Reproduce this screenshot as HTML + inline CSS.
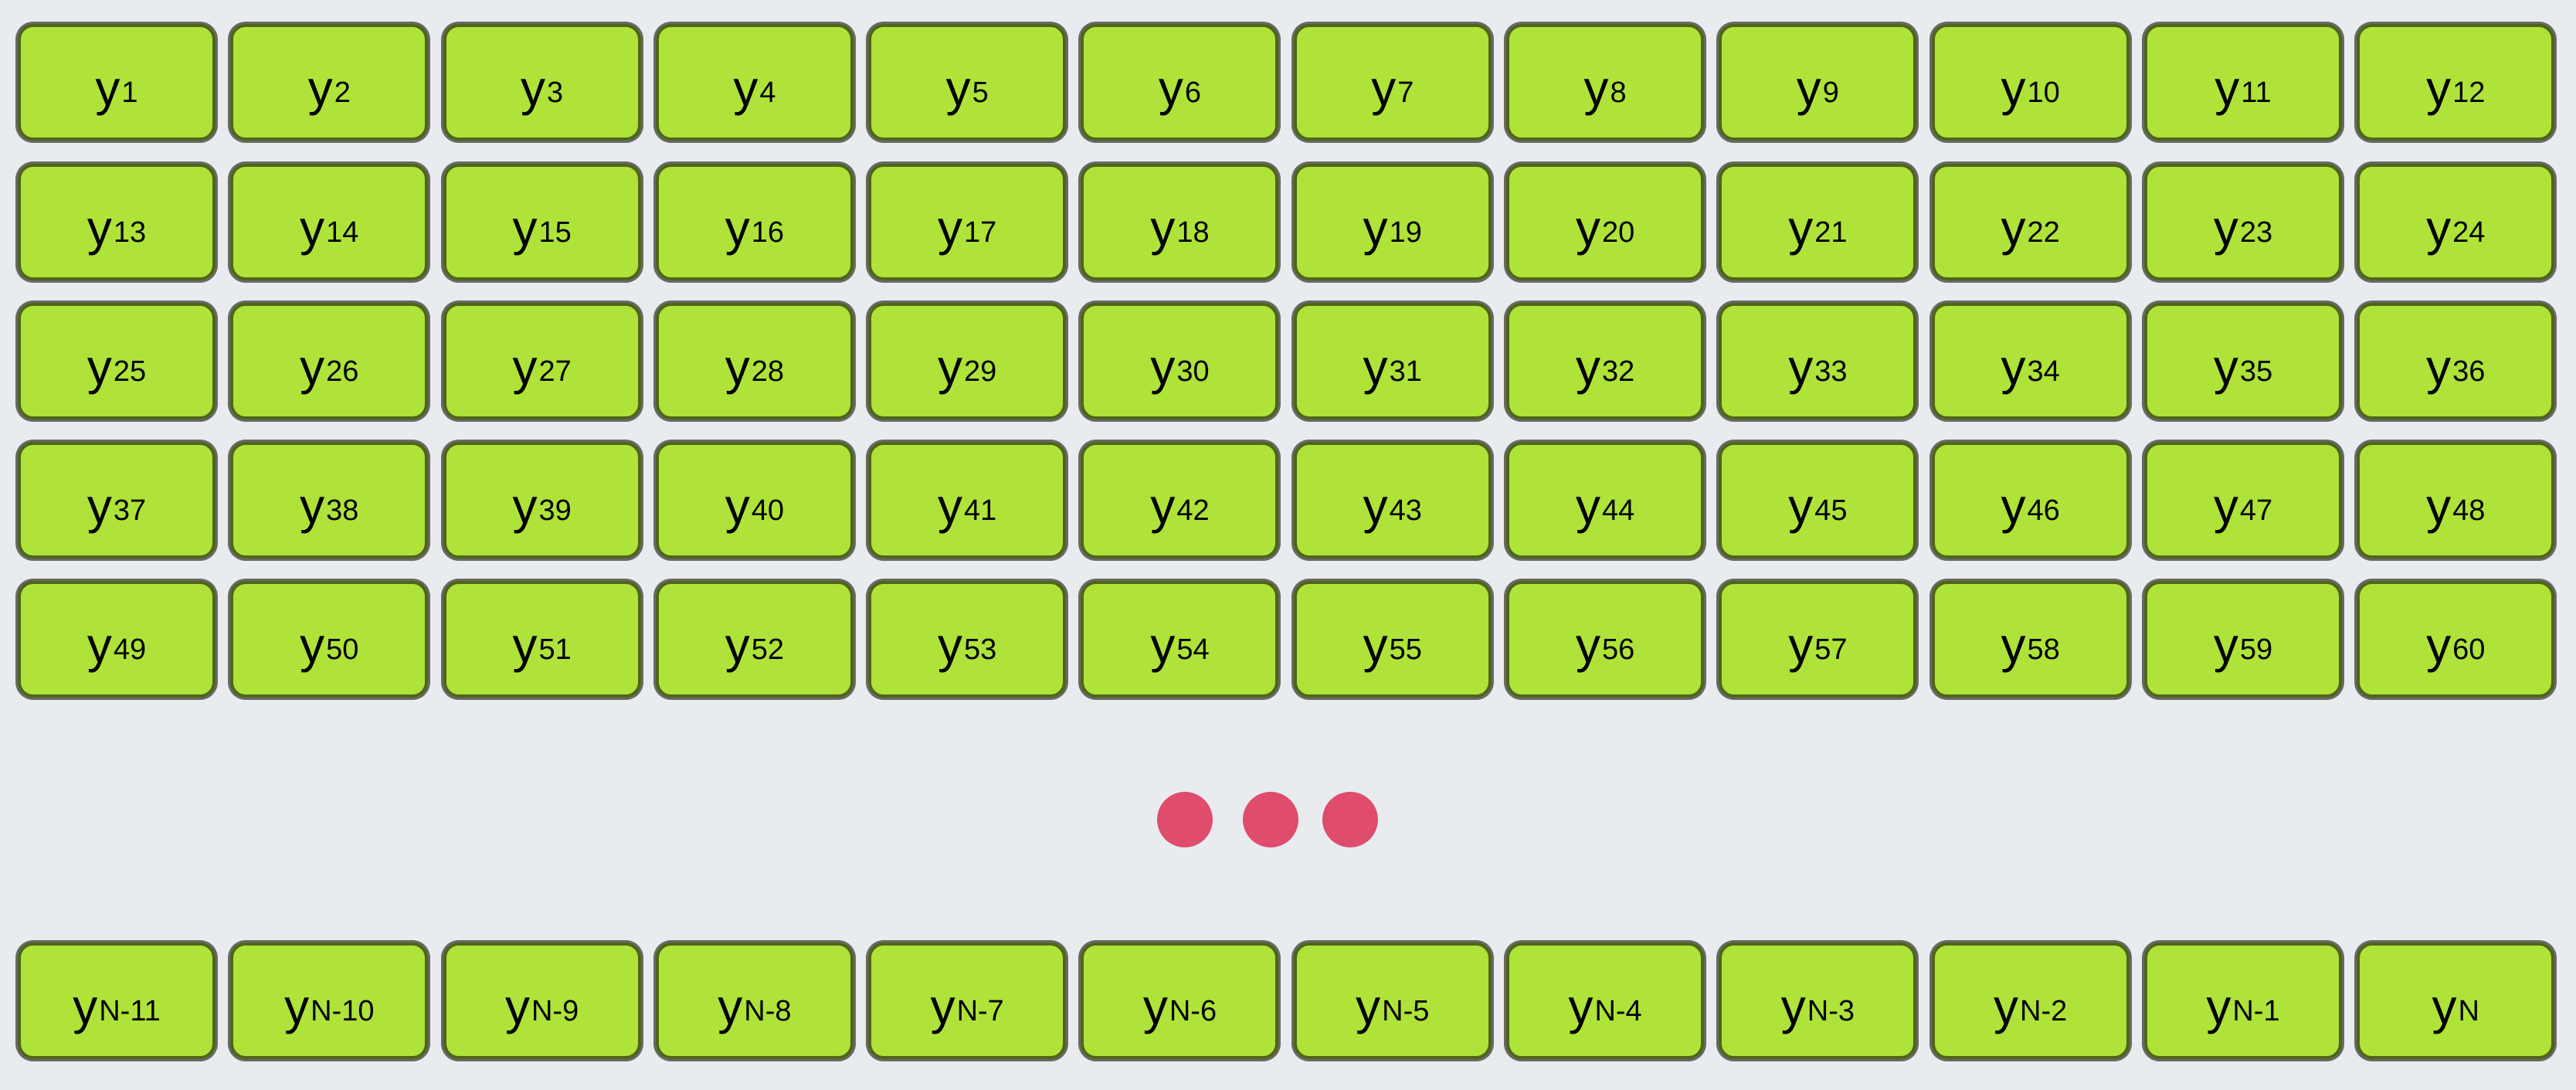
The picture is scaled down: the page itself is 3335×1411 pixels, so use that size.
<!DOCTYPE html>
<html><head><meta charset="utf-8"><style>
html,body{margin:0;padding:0;}
body{width:3335px;height:1411px;background:#e8ecef;position:relative;overflow:hidden;font-family:"Liberation Sans","DejaVu Sans",sans-serif;}
.r{position:absolute;left:23px;display:flex;gap:19.3px;}
.b{width:256px;height:151px;box-sizing:border-box;background:#afe339;border:4px solid #4f6519;border-radius:20px;box-shadow:0 0 0 3px #666a66;display:flex;align-items:center;justify-content:center;padding-top:14px;color:#000;font-size:64px;line-height:1;}
.b sub{font-size:38px;vertical-align:baseline;position:relative;top:6px;margin-left:2px;}
.d{position:absolute;top:1025px;width:72px;height:72px;border-radius:50%;background:#df4c6c;}
</style></head><body>
<div class="r" style="top:31px">
<div class="b">y<sub>1</sub></div><div class="b">y<sub>2</sub></div><div class="b">y<sub>3</sub></div><div class="b">y<sub>4</sub></div><div class="b">y<sub>5</sub></div><div class="b">y<sub>6</sub></div><div class="b">y<sub>7</sub></div><div class="b">y<sub>8</sub></div><div class="b">y<sub>9</sub></div><div class="b">y<sub>10</sub></div><div class="b">y<sub>11</sub></div><div class="b">y<sub>12</sub></div>
</div>
<div class="r" style="top:212px">
<div class="b">y<sub>13</sub></div><div class="b">y<sub>14</sub></div><div class="b">y<sub>15</sub></div><div class="b">y<sub>16</sub></div><div class="b">y<sub>17</sub></div><div class="b">y<sub>18</sub></div><div class="b">y<sub>19</sub></div><div class="b">y<sub>20</sub></div><div class="b">y<sub>21</sub></div><div class="b">y<sub>22</sub></div><div class="b">y<sub>23</sub></div><div class="b">y<sub>24</sub></div>
</div>
<div class="r" style="top:392px">
<div class="b">y<sub>25</sub></div><div class="b">y<sub>26</sub></div><div class="b">y<sub>27</sub></div><div class="b">y<sub>28</sub></div><div class="b">y<sub>29</sub></div><div class="b">y<sub>30</sub></div><div class="b">y<sub>31</sub></div><div class="b">y<sub>32</sub></div><div class="b">y<sub>33</sub></div><div class="b">y<sub>34</sub></div><div class="b">y<sub>35</sub></div><div class="b">y<sub>36</sub></div>
</div>
<div class="r" style="top:572px">
<div class="b">y<sub>37</sub></div><div class="b">y<sub>38</sub></div><div class="b">y<sub>39</sub></div><div class="b">y<sub>40</sub></div><div class="b">y<sub>41</sub></div><div class="b">y<sub>42</sub></div><div class="b">y<sub>43</sub></div><div class="b">y<sub>44</sub></div><div class="b">y<sub>45</sub></div><div class="b">y<sub>46</sub></div><div class="b">y<sub>47</sub></div><div class="b">y<sub>48</sub></div>
</div>
<div class="r" style="top:752px">
<div class="b">y<sub>49</sub></div><div class="b">y<sub>50</sub></div><div class="b">y<sub>51</sub></div><div class="b">y<sub>52</sub></div><div class="b">y<sub>53</sub></div><div class="b">y<sub>54</sub></div><div class="b">y<sub>55</sub></div><div class="b">y<sub>56</sub></div><div class="b">y<sub>57</sub></div><div class="b">y<sub>58</sub></div><div class="b">y<sub>59</sub></div><div class="b">y<sub>60</sub></div>
</div>
<div class="d" style="left:1498px"></div>
<div class="d" style="left:1609px"></div>
<div class="d" style="left:1712px"></div>
<div class="r" style="top:1220px">
<div class="b">y<sub>N-11</sub></div><div class="b">y<sub>N-10</sub></div><div class="b">y<sub>N-9</sub></div><div class="b">y<sub>N-8</sub></div><div class="b">y<sub>N-7</sub></div><div class="b">y<sub>N-6</sub></div><div class="b">y<sub>N-5</sub></div><div class="b">y<sub>N-4</sub></div><div class="b">y<sub>N-3</sub></div><div class="b">y<sub>N-2</sub></div><div class="b">y<sub>N-1</sub></div><div class="b">y<sub>N</sub></div>
</div>
</body></html>
